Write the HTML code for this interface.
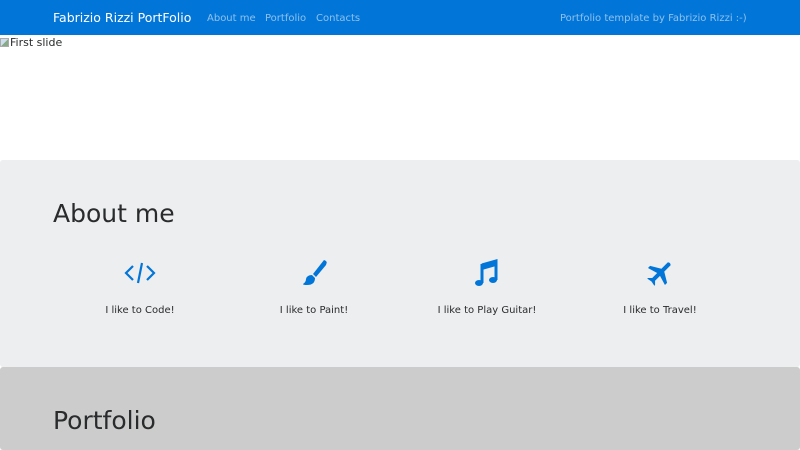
<!DOCTYPE html>
<html><head><meta charset="utf-8">
<style>
*{box-sizing:border-box;margin:0;padding:0}
body{width:800px;height:450px;overflow:hidden;font-family:"DejaVu Sans","Liberation Sans",sans-serif;background:#fff;color:#292b2c}
nav{height:35px;background:#0275d8;position:relative;font-size:10px}
nav .brand{position:absolute;left:53px;top:10px;color:#fff;font-size:12.5px}
nav a{position:absolute;top:13px;color:rgba(255,255,255,.55)}
.slide{height:125px;font-size:11px;position:relative}
.slide span{position:absolute;left:0;top:1px;}
.slide i{display:inline-block;width:9px;height:9px;border:1px solid #aaa;background:linear-gradient(135deg,#cde 50%,#8a8 50%);vertical-align:-1px;margin-right:1px}
.about{position:absolute;top:160px;left:0;width:800px;height:207px;background:#eceeef;border-radius:3px}
.about h2,.port h2{position:absolute;left:53px;font-weight:400;font-size:25px;color:#292b2c}
.about h2{top:39px}
.item{position:absolute;top:98px;width:174px;text-align:center;font-size:10px}
.item svg{display:block;margin:0 auto 17px;height:30px;width:34px}
.port{position:absolute;top:367px;left:0;width:800px;height:83px;background:#cccccc;border-radius:3px}
.port h2{top:39px}
</style></head><body>
<nav><span class="brand">Fabrizio Rizzi PortFolio</span>
<a style="left:207px">About me</a><a style="left:265px">Portfolio</a><a style="left:316px">Contacts</a>
<a style="left:560px">Portfolio template by Fabrizio Rizzi :-)</a></nav>
<div class="slide"><span><i></i>First slide</span></div>
<div class="about"><h2>About me</h2>
<div class="item" style="left:53px"><svg viewBox="0 0 34 30"><path d="M10 8 L3 15 L10 22 M24 8 L31 15 L24 22 M19 5 L15 25" fill="none" stroke="#0275d8" stroke-width="2.2"/></svg>I like to Code!</div>
<div class="item" style="left:227px"><svg viewBox="0 0 34 30"><path d="M27 2 Q31 3 29 7 L19 19 L16 16 Z" fill="#0275d8"/><path d="M15 17 L18 20 Q18 27 10 27 Q6 27 6 26 Q9 24 9 21 Q10 17 15 17Z" fill="#0275d8"/></svg>I like to Paint!</div>
<div class="item" style="left:400px"><svg viewBox="0 0 34 30"><path d="M12 7 L26 3 L26 22" fill="none" stroke="#0275d8" stroke-width="3"/><path d="M12 6 L12 25" stroke="#0275d8" stroke-width="3"/><ellipse cx="9" cy="25" rx="4" ry="3" fill="#0275d8"/><ellipse cx="23" cy="22" rx="4" ry="3" fill="#0275d8"/><path d="M12 7 L26 3 L26 8 L12 12Z" fill="#0275d8"/></svg>I like to Play Guitar!</div>
<div class="item" style="left:573px"><svg viewBox="0 0 34 30"><g transform="rotate(45 17 15)" fill="#0275d8"><path d="M15 2 Q17 0 19 2 L19 11 L29 17 L29 20 L19 17 L19 24 L22 27 L22 28 L17 27 L12 28 L12 27 L15 24 L15 17 L5 20 L5 17 L15 11Z"/></g></svg>I like to Travel!</div>
</div>
<div class="port"><h2>Portfolio</h2></div>
</body></html>
